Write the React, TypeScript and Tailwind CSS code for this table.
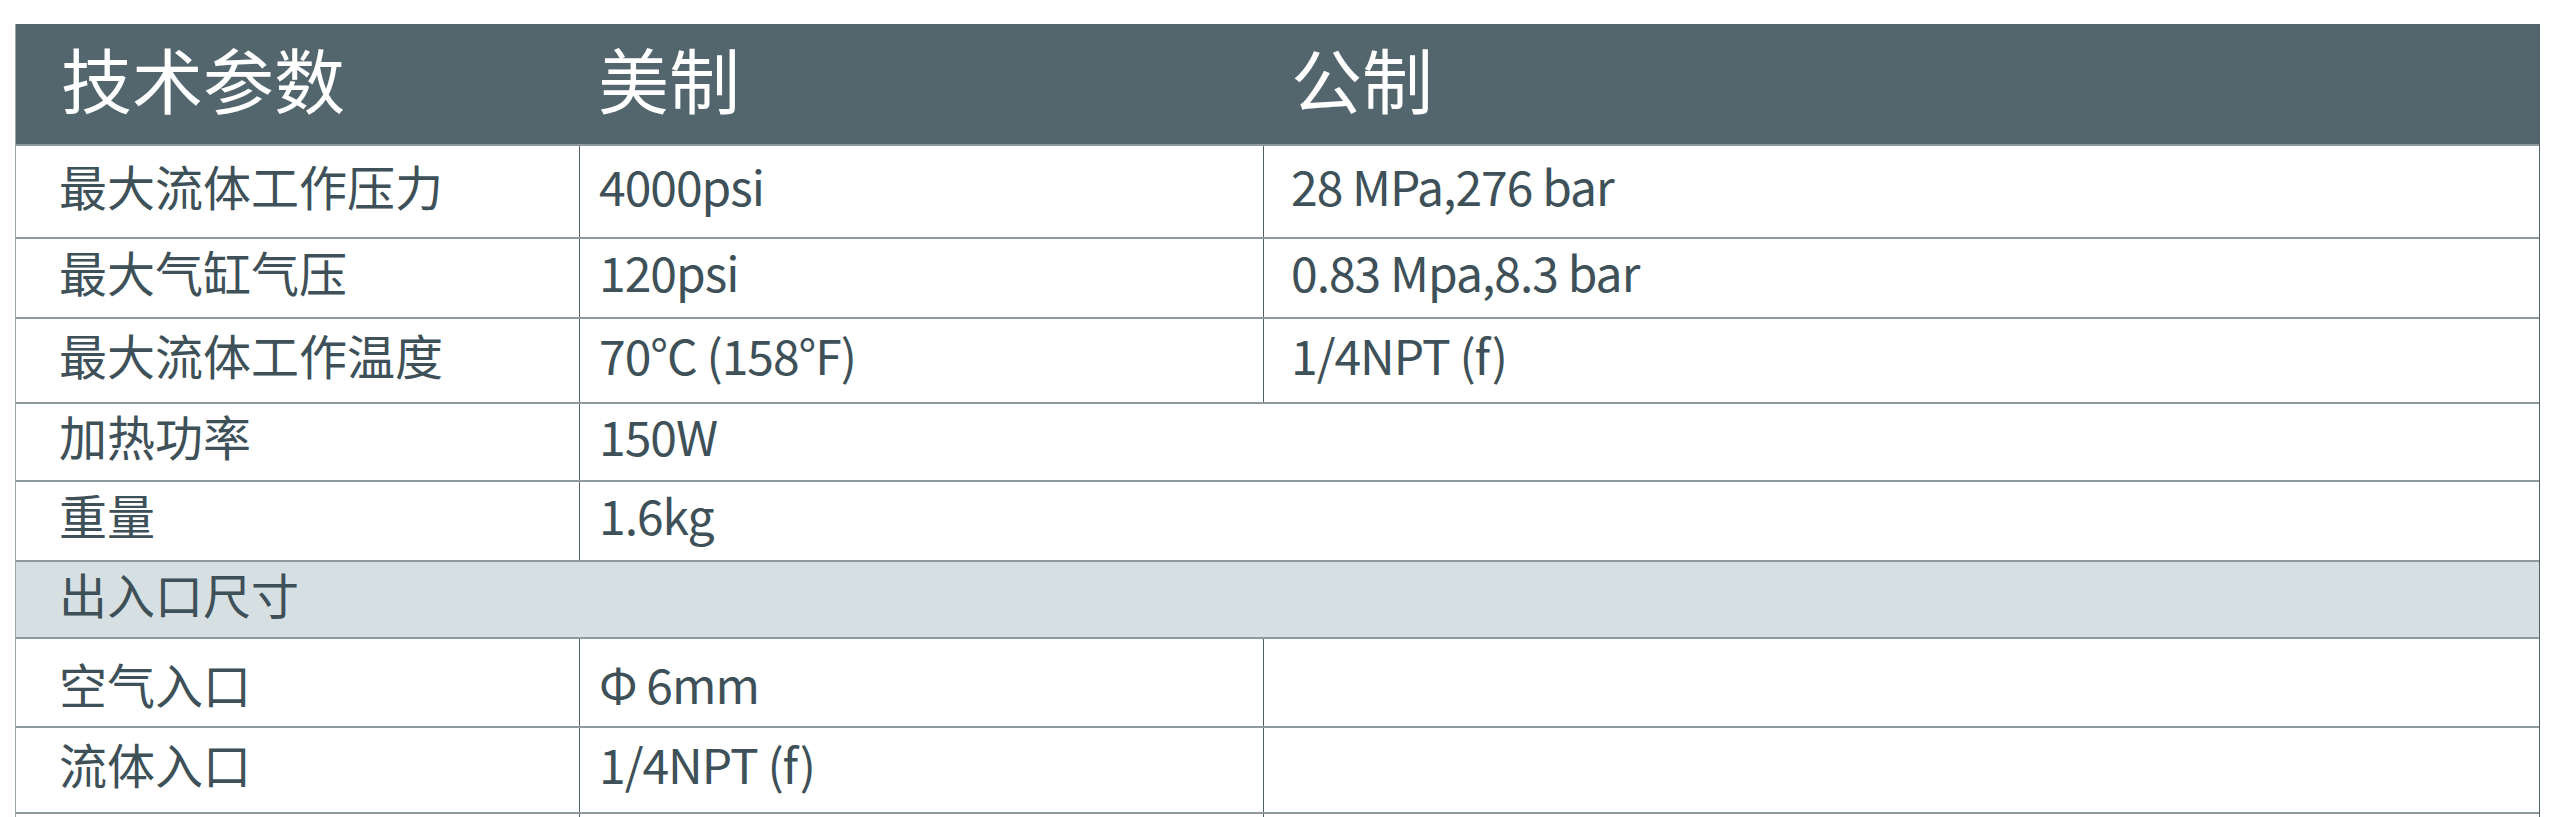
import React from "react";

type Row = {
  label: string;
  us?: string;
  metric?: string;
  span?: boolean;
  h: string;
  pt?: string;
};

const rows: Row[] = [
  { label: "最大流体工作压力", us: "4000psi", metric: "28 MPa,276 bar", h: "h-[93px]" },
  { label: "最大气缸气压", us: "120psi", metric: "0.83 Mpa,8.3 bar", h: "h-[80px]" },
  { label: "最大流体工作温度", us: "70°C (158°F)", metric: "1/4NPT (f)", h: "h-[85px]" },
  { label: "加热功率", us: "150W", span: true, h: "h-[78px]" },
  { label: "重量", us: "1.6kg", span: true, h: "h-[80px]" },
];

const ports: Row[] = [
  { label: "空气入口", us: "Φ 6mm", metric: "", h: "h-[89px]", pt: "pt-[14px]" },
  { label: "流体入口", us: "1/4NPT (f)", metric: "", h: "h-[86px]" },
  { label: "", us: "", metric: "", h: "h-[86px]" },
];

function DataRow({ row }: { row: Row }) {
  const pad = `pb-[14px] ${row.pt ?? ""}`;
  return (
    <div className={`grid grid-cols-[563px_684px_1fr] border-t-2 border-[#8e9aa0] ${row.h}`}>
      <div className={`flex items-center pl-[43px] ${pad}`}>{row.label}</div>
      {row.span ? (
        <div className={`col-span-2 flex items-center border-l border-[#4f6068] pl-[19px] tracking-[-1px] ${pad}`}>
          {row.us}
        </div>
      ) : (
        <>
          <div className={`flex items-center border-l border-[#4f6068] pl-[19px] tracking-[-1px] ${pad}`}>
            {row.us}
          </div>
          <div className={`flex items-center border-l border-[#4f6068] pl-[27px] tracking-[-1px] ${pad}`}>
            {row.metric}
          </div>
        </>
      )}
    </div>
  );
}

export default function App() {
  return (
    <div
      className="min-h-screen bg-white pl-[15px] pt-[24px] text-[#3e5058]"
      style={{ fontFamily: '"Noto Sans CJK SC", "Noto Sans", sans-serif' }}
    >
      <div className="w-[2525px] border-l border-r border-l-[#9aa5aa] border-r-[#52636b] text-[48px] leading-none">
        <div className="grid h-[120px] grid-cols-[563px_684px_1fr] items-center bg-[#53666e] pb-[13px] text-[71px] text-white">
          <div className="pl-[45px]">技术参数</div>
          <div className="pl-[19px]">美制</div>
          <div className="pl-[28px]">公制</div>
        </div>

        {rows.map((r) => (
          <DataRow key={r.label} row={r} />
        ))}

        <div className="flex h-[77px] items-center border-t-2 border-[#8e9aa0] bg-[#d6dfe1] pb-[14px] pl-[43px]">
          出入口尺寸
        </div>

        {ports.map((r, i) => (
          <DataRow key={`p${i}`} row={r} />
        ))}
      </div>
    </div>
  );
}
